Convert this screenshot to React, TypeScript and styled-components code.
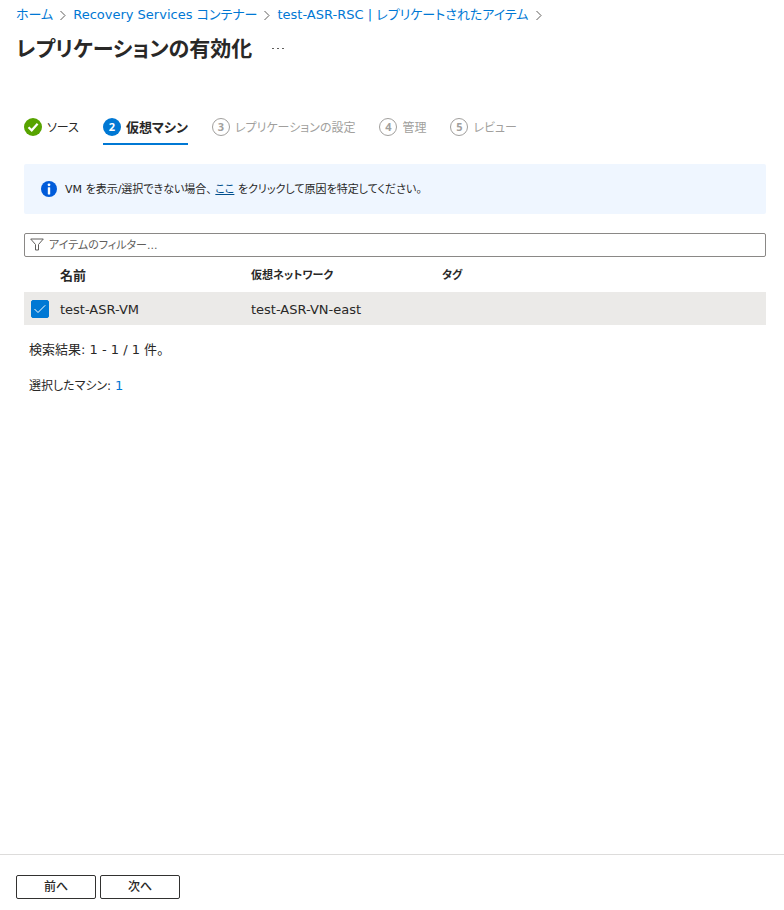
import React from "react";
import styled, { createGlobalStyle, css } from "styled-components";

const GlobalStyle = createGlobalStyle`
  *, *::before, *::after { box-sizing: border-box; }
  body {
    margin: 0;
    background: #fff;
    color: #292827;
    font-family: "DejaVu Sans", "Noto Sans CJK JP", sans-serif;
    font-size: 13px;
    line-height: 20px;
    font-feature-settings: "palt";
  }
  button, input { font: inherit; color: inherit; font-feature-settings: inherit; }
`;

const Page = styled.div`
  min-height: 100vh;
  display: flex;
  flex-direction: column;
`;

const Header = styled.header`
  padding: 5px 16px 0;
`;

const Breadcrumb = styled.nav`
  display: flex;
  align-items: center;
  gap: 6px;
  white-space: nowrap;
`;

const Crumb = styled.a`
  color: #0078d4;
  font-size: 13px;
  text-decoration: none;
  &:hover { text-decoration: underline; }
`;

const TitleRow = styled.div`
  display: flex;
  align-items: center;
  gap: 20px;
  margin-top: 8px;
`;

const Title = styled.h1`
  margin: 0;
  font-size: 21px;
  line-height: 32px;
  font-weight: 700;
`;

const MoreButton = styled.button`
  display: flex;
  padding: 2px 0;
  border: 0;
  background: none;
`;

const Main = styled.main`
  flex: 1;
  padding: 0 18px 0 24px;
`;

const Steps = styled.div`
  display: flex;
  gap: 24px;
  margin-top: 45px;
  white-space: nowrap;
`;

type StepState = "done" | "current" | "pending";

const StepButton = styled.button<{ $state: StepState }>`
  display: flex;
  align-items: center;
  gap: 5px;
  height: 35px;
  padding: 1px 0 0;
  border: 0;
  border-bottom: 2px solid transparent;
  background: none;
  font-size: 12px;
  ${(p) => p.$state === "pending" && css`color: #a19f9d;`}
  ${(p) => p.$state === "current" && css`
    font-size: 13px;
    font-weight: 700;
    border-bottom-color: #0078d4;
  `}
`;

const StepLabel = styled.span`
  padding-top: 2px;
`;

const StepBadge = styled.span<{ $state: StepState }>`
  display: flex;
  align-items: center;
  justify-content: center;
  width: 18px;
  height: 18px;
  border-radius: 50%;
  font-family: "Open Sans", "Noto Sans", sans-serif;
  font-size: 11px;
  line-height: 16px;
  font-weight: 700;
  ${(p) => p.$state === "done" && css`background: #57a300;`}
  ${(p) => p.$state === "current" && css`background: #0078d4; color: #fff;`}
  ${(p) => p.$state === "pending" && css`border: 1px solid #a19f9d;`}
`;

const Notice = styled.div`
  display: flex;
  align-items: center;
  gap: 8px;
  height: 50px;
  margin-top: 19px;
  padding: 0 17px;
  border-radius: 2px;
  background: #eff6ff;
  font-size: 11px;
`;

const NoticeText = styled.span`
  padding-top: 2px;
`;

const NoticeLink = styled.a`
  color: #004e8c;
  text-decoration: underline;
`;

const FilterBox = styled.label`
  display: flex;
  align-items: center;
  gap: 5px;
  height: 24px;
  margin-top: 19px;
  padding: 0 5px;
  border: 1px solid #8a8886;
  border-radius: 2px;
`;

const FilterInput = styled.input`
  flex: 1;
  min-width: 0;
  padding: 2px 0 0;
  border: 0;
  outline: 0;
  background: none;
  font-size: 11px;
  &::placeholder { color: #605e5c; opacity: 1; }
`;

const MachineTable = styled.table`
  width: 100%;
  border-collapse: collapse;
  table-layout: fixed;
`;

const SelectColumn = styled.col`
  width: 36px;
`;

const DataColumn = styled.col`
  width: 191px;
`;

const HeadCell = styled.th<{ $compact?: boolean }>`
  height: 35px;
  padding: 2px 0 0;
  font-size: ${(p) => (p.$compact ? 11 : 13)}px;
  font-weight: 700;
  text-align: left;
`;

const Row = styled.tr`
  background: #ebeae8;
`;

const Cell = styled.td`
  height: 33px;
  padding: 2px 0 0;
`;

const CheckCell = styled(Cell)`
  padding: 0;
`;

const CheckLabel = styled.label`
  display: grid;
  width: 18px;
  height: 18px;
  margin-left: 7px;
  > * { grid-area: 1 / 1; }
  > svg { pointer-events: none; visibility: hidden; }
  > input:checked + svg { visibility: visible; }
`;

const CheckInput = styled.input`
  appearance: none;
  width: 18px;
  height: 18px;
  margin: 0;
  border: 1px solid #605e5c;
  border-radius: 2px;
  background: #fff;
  &:checked { border-color: #0078d4; background: #0078d4; }
`;

const Summary = styled.p<{ $compact?: boolean }>`
  margin: 15px 0 0 5px;
  font-size: ${(p) => (p.$compact ? 12 : 13)}px;
  & + & { margin-top: 16px; }
`;

const CountLink = styled.a`
  color: #0078d4;
  font-size: 13px;
  text-decoration: none;
`;

const Footer = styled.footer`
  display: flex;
  gap: 4px;
  padding: 20px 16px 11px;
  border-top: 1px solid #dddcdb;
`;

const FooterButton = styled.button`
  width: 80px;
  height: 24px;
  padding: 0;
  border: 1px solid #323130;
  border-radius: 2px;
  background: #fff;
  font-size: 12px;
  font-weight: 500;
`;

const Chevron = () => (
  <svg width="8" height="12" viewBox="0 0 8 12" fill="none" stroke="#605e5c" aria-hidden="true">
    <path d="M1.5 2 6 6.5 1.5 11" />
  </svg>
);

const crumbs = ["ホーム", "Recovery Services コンテナー", "test-ASR-RSC | レプリケートされたアイテム"];

const steps: { label: string; state: StepState }[] = [
  { label: "ソース", state: "done" },
  { label: "仮想マシン", state: "current" },
  { label: "レプリケーションの設定", state: "pending" },
  { label: "管理", state: "pending" },
  { label: "レビュー", state: "pending" },
];

const machines = [{ name: "test-ASR-VM", network: "test-ASR-VN-east", tag: "" }];

export default function App() {
  return (
    <Page>
      <GlobalStyle />
      <Header>
        <Breadcrumb>
          {crumbs.map((c) => (
            <React.Fragment key={c}>
              <Crumb href="#">{c}</Crumb>
              <Chevron />
            </React.Fragment>
          ))}
        </Breadcrumb>
        <TitleRow>
          <Title>レプリケーションの有効化</Title>
          <MoreButton aria-label="その他">
            <svg width="12" height="4" viewBox="0 0 12 4" fill="#605e5c" aria-hidden="true">
              <rect x="0" y="1" width="2" height="1" />
              <rect x="5" y="1" width="2" height="1" />
              <rect x="10" y="1" width="2" height="1" />
            </svg>
          </MoreButton>
        </TitleRow>
      </Header>
      <Main>
        <Steps>
          {steps.map((s, i) => (
            <StepButton key={s.label} $state={s.state}>
              <StepBadge $state={s.state}>
                {s.state === "done" ? (
                  <svg width="18" height="18" viewBox="0 0 18 18" fill="none" stroke="#fff" strokeWidth="2.2" aria-hidden="true">
                    <path d="M4.5 9.2 7.7 12.3 13.6 5.8" />
                  </svg>
                ) : (
                  i + 1
                )}
              </StepBadge>
              <StepLabel>{s.label}</StepLabel>
            </StepButton>
          ))}
        </Steps>
        <Notice>
          <svg width="16" height="16" viewBox="0 0 16 16" aria-hidden="true">
            <circle cx="8" cy="8" r="8" fill="#015cda" />
            <rect x="6.8" y="6.2" width="2.4" height="7.4" rx="0.6" fill="#fff" />
            <circle cx="8" cy="3.8" r="1.4" fill="#fff" />
          </svg>
          <NoticeText>
            VM を表示/選択できない場合、 <NoticeLink href="#">ここ</NoticeLink> をクリックして原因を特定してください。
          </NoticeText>
        </Notice>
        <FilterBox>
          <svg width="14" height="14" viewBox="0 0 14 14" fill="none" stroke="#605e5c" aria-hidden="true">
            <path d="M0.7 1H13.3L8.5 6.5V12H5.5V6.5Z" />
          </svg>
          <FilterInput type="text" placeholder="アイテムのフィルター..." aria-label="アイテムのフィルター" />
        </FilterBox>
        <MachineTable>
          <colgroup>
            <SelectColumn />
            <DataColumn />
            <DataColumn />
            <col />
          </colgroup>
          <thead>
            <tr>
              <HeadCell />
              <HeadCell scope="col">名前</HeadCell>
              <HeadCell scope="col" $compact>仮想ネットワーク</HeadCell>
              <HeadCell scope="col" $compact>タグ</HeadCell>
            </tr>
          </thead>
          <tbody>
            {machines.map((m) => (
              <Row key={m.name}>
                <CheckCell>
                  <CheckLabel>
                    <CheckInput type="checkbox" defaultChecked aria-label={m.name} />
                    <svg width="18" height="18" viewBox="0 0 18 18" fill="none" stroke="#fff" aria-hidden="true">
                      <path d="M3.5 9 7 12.5 14.2 5.3" />
                    </svg>
                  </CheckLabel>
                </CheckCell>
                <Cell>{m.name}</Cell>
                <Cell>{m.network}</Cell>
                <Cell>{m.tag}</Cell>
              </Row>
            ))}
          </tbody>
        </MachineTable>
        <Summary>検索結果: 1 - 1 / 1 件。</Summary>
        <Summary $compact>
          選択したマシン: <CountLink href="#">1</CountLink>
        </Summary>
      </Main>
      <Footer>
        <FooterButton>前へ</FooterButton>
        <FooterButton>次へ</FooterButton>
      </Footer>
    </Page>
  );
}
